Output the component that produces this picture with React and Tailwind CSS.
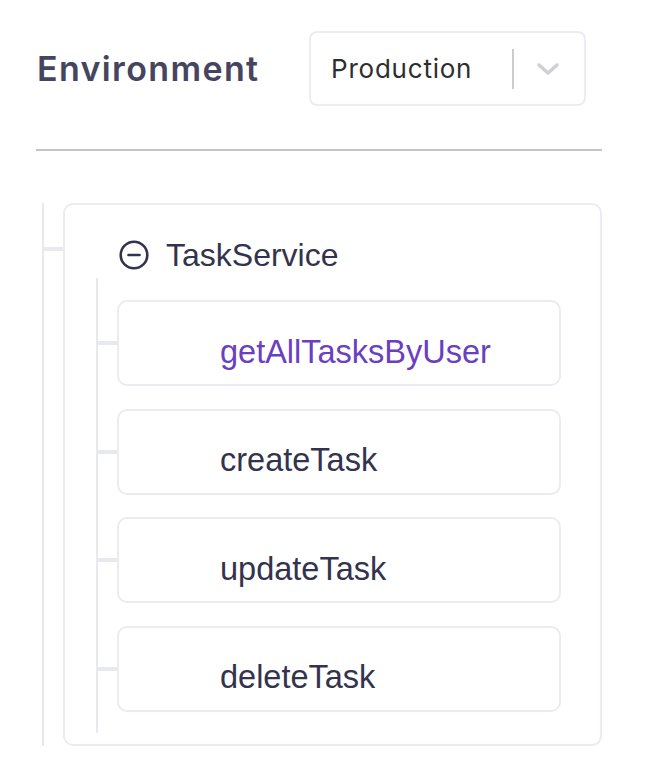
import { useState } from 'react';

const methods = ['getAllTasksByUser', 'createTask', 'updateTask', 'deleteTask'];

// Collapse icon (circle with minus)
function MinusCircle() {
  return (
    <svg width="30" height="30" viewBox="0 0 30 30" fill="none">
      <circle cx="15" cy="15" r="13.3" stroke="#33334d" strokeWidth="2.6" />
      <line x1="9.5" y1="15" x2="20.5" y2="15" stroke="#33334d" strokeWidth="2.6" strokeLinecap="round" />
    </svg>
  );
}

function Chevron() {
  return (
    <svg width="24" height="14" viewBox="0 0 24 14" fill="none">
      <path d="M3 3L12 11L21 3" stroke="#d0d0d4" strokeWidth="3.6" strokeLinecap="round" strokeLinejoin="round" />
    </svg>
  );
}

function MethodCard({ name, active }) {
  return (
    <div className="flex items-center">
      <div className="w-[19px] h-[4px] bg-[#e8e8ef]"></div>
      <div className="w-[444px] h-[86px] border-2 border-[#ebebf1] rounded-[10px] flex items-center pl-[101px] pt-[18px] bg-white">
        <span
          className={`text-[32.5px] leading-none ${active ? 'text-[#6a3fc2]' : 'text-[#33334d]'}`}
          style={{ fontFamily: '"Liberation Sans", Arial, sans-serif' }}
        >
          {name}
        </span>
      </div>
    </div>
  );
}

export default function App() {
  const [selected] = useState('getAllTasksByUser');

  return (
    <div className="min-h-screen bg-white">
      {/* Header */}
      <div className="flex items-center pt-[31px] pl-[37px]">
        <div
          className="w-[272px] text-[34px] font-semibold tracking-[0.04em] text-[#45455f] leading-none"
          style={{ fontFamily: 'Inter, sans-serif' }}
        >
          Environment
        </div>
        <div className="w-[277px] h-[75px] border-2 border-[#ececf2] rounded-[8px] flex items-center pl-[20px]">
          <span
            className="w-[181px] text-[26px] tracking-[0.03em] text-[#2e2e2e] leading-none"
            style={{ fontFamily: 'Inter, sans-serif' }}
          >
            Production
          </span>
          <div className="w-[2px] h-[40px] bg-[#cccccc]"></div>
          <div className="ml-[22px] flex items-center">
            <Chevron />
          </div>
        </div>
      </div>

      <div className="ml-[36px] mt-[43px] w-[566px] h-[2px] bg-[#c4c4c4]"></div>

      {/* Tree */}
      <div className="flex ml-[42px] mt-[52px]">
        <div className="w-[2px] bg-[#e8e8ef]"></div>
        <div className="w-[19px] h-[4px] mt-[44px] bg-[#e8e8ef]"></div>
        <div className="w-[539px] border-2 border-[#ebebf1] rounded-[10px] pl-[31px] pt-[34px] pb-[11px]">
          <div className="flex items-center h-[32px] ml-[23px] gap-[17px]">
            <MinusCircle />
            <span
              className="text-[32px] leading-none text-[#33334d]"
              style={{ fontFamily: '"Liberation Sans", Arial, sans-serif' }}
            >
              TaskService
            </span>
          </div>
          <div className="flex mt-[7px]">
            <div className="w-[2px] bg-[#e8e8ef]"></div>
            <div className="flex flex-col gap-[22.5px] pt-[22px] pb-[21.5px]">
              {methods.map((m) => (
                <MethodCard key={m} name={m} active={m === selected} />
              ))}
            </div>
          </div>
        </div>
      </div>
    </div>
  );
}
